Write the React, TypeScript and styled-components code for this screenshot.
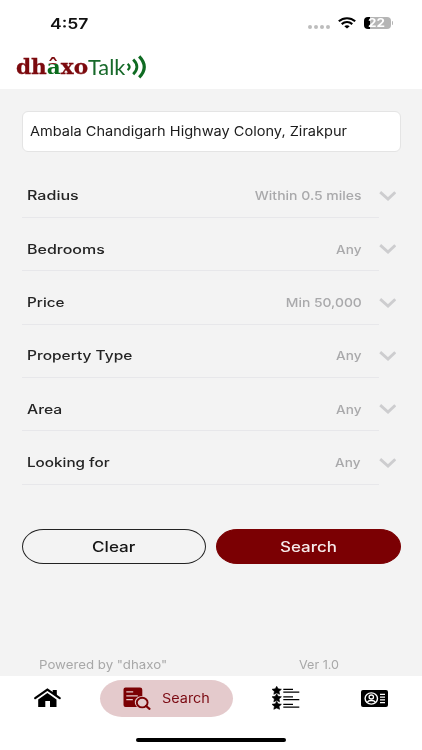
import React from 'react';
import styled, { createGlobalStyle } from 'styled-components';

const GlobalStyle = createGlobalStyle`
  * { box-sizing: border-box; }
  html, body { margin: 0; padding: 0; background: #fff; overflow: hidden; }
  body { font-family: Inter, "Liberation Sans", sans-serif; }
  svg { display: block; flex: none; }
  button { font-family: inherit; }
`;

const Screen = styled.div`
  display: flex;
  flex-direction: column;
  width: 422px;
  height: 750px;
  background: #f3f3f3;
`;

/* Extended lettering: glyphs are widened without changing their height. */
const Wide = styled.span<{ $sx: number; $origin?: string }>`
  display: inline-block;
  white-space: nowrap;
  transform: scaleX(${(p) => p.$sx});
  transform-origin: ${(p) => p.$origin ?? 'left'} center;
`;

const Header = styled.header`
  height: 89px;
  background: #fff;
`;

const StatusBar = styled.div`
  display: flex;
  align-items: center;
  height: 46px;
  padding-left: 50px;
  padding-right: 29px;
`;

const Clock = styled.div`
  flex: 1;
  padding-top: 1px;
  font-size: 15px;
  font-weight: 600;
  line-height: 20px;
  color: #111;
`;

const StatusIcons = styled.div`
  display: flex;
  align-items: center;
`;

const Dots = styled.div`
  display: flex;
  gap: 1.7px;
  margin: 8px 8px 0 0;
  i {
    width: 4px;
    height: 4px;
    border-radius: 50%;
    background: #bdbdbd;
  }
`;

const Battery = styled.div`
  display: flex;
  align-items: center;
  justify-content: center;
  width: 27px;
  height: 12.5px;
  margin-left: 8px;
  border-radius: 4px;
  background: linear-gradient(90deg, #000 6px, #b5b5b5 6px);
  color: #fff;
  font-size: 12px;
  font-weight: 700;
  line-height: 12px;
`;

const BatteryCap = styled.div`
  width: 1.5px;
  height: 4px;
  margin-left: 1px;
  border-radius: 0 2px 2px 0;
  background: #b5b5b5;
`;

const Logo = styled.div`
  display: flex;
  align-items: center;
  height: 41px;
  padding-left: 16px;
`;

const LogoSerif = styled.div`
  width: 71.5px;
  font: 700 21px/30px "DejaVu Serif", serif;
  color: #7c0a0e;
  -webkit-text-stroke: 0.3px #7c0a0e;
`;

const LogoAccent = styled.span`
  -webkit-text-stroke: 0;
  background: linear-gradient(#7c0a0e 0 41%, #0b6b1c 41%);
  background-clip: text;
  -webkit-background-clip: text;
  color: transparent;
`;

const LogoSans = styled.div`
  width: 38.5px;
  font: 400 20.5px/30px Lato, sans-serif;
  color: #17692a;
`;

const Main = styled.main`
  display: flex;
  flex-direction: column;
  flex: 1;
  padding: 22px 21.5px 0 21.5px;
`;

const Field = styled.div`
  display: flex;
  align-items: center;
  height: 41px;
  padding: 0 0 1px 7px;
  border: 1px solid #e4e4e4;
  border-radius: 6px;
  background: #fff;
  color: #1b1b1b;
  font-size: 13px;
`;

const Filters = styled.div`
  display: flex;
  flex-direction: column;
  margin-top: 12.8px;
`;

const FilterRow = styled.div`
  display: grid;
  grid-template-columns: 357px 1fr;
  height: 53.32px;
`;

const FilterBody = styled.div`
  display: flex;
  align-items: center;
  justify-content: space-between;
  padding: 10px 17px 0 5px;
  border-bottom: 1px solid #e7e7ea;
`;

const FilterLabel = styled.div`
  color: #242424;
  font-size: 12.5px;
  font-weight: 500;
`;

const FilterValue = styled.div<{ $shift?: number }>`
  margin-right: ${(p) => p.$shift ?? 0}px;
  color: #a9a9ab;
  font-size: 12px;
  font-weight: 500;
`;

const FilterArrow = styled.div`
  display: flex;
  align-items: center;
  padding-top: 9px;
`;

const Actions = styled.div`
  display: grid;
  grid-template-columns: 1fr 1fr;
  gap: 10.5px;
  margin-top: 44px;
`;

const ActionButton = styled.button<{ $primary?: boolean }>`
  height: 35.5px;
  padding: 0;
  border: 1px solid ${(p) => (p.$primary ? '#7b0003' : '#222')};
  border-radius: 22px / 18px;
  background: ${(p) => (p.$primary ? '#7b0003' : 'transparent')};
  color: ${(p) => (p.$primary ? '#f6eaea' : '#161616')};
  font-size: 14px;
  font-weight: 500;
`;

const Footnote = styled.footer`
  display: grid;
  grid-template-columns: 260.5px 1fr;
  margin-top: auto;
  padding: 0 0 2px 17px;
  color: #a8a8a8;
  font-size: 12px;
  line-height: 18px;
`;

const BottomBar = styled.nav`
  height: 74px;
  background: #fff;
`;

const Tabs = styled.div`
  display: grid;
  grid-template-columns: 94.6px 144px 94.2px 83.6px;
  align-items: center;
  justify-items: center;
  height: 44px;
`;

const ActiveTab = styled.div`
  display: flex;
  align-items: center;
  gap: 11.5px;
  width: 133px;
  height: 37px;
  padding-left: 22.5px;
  border-radius: 22px / 18.5px;
  background: #e4cacc;
  color: #7b0a12;
  font-size: 13px;
`;

const HomeIndicator = styled.div`
  width: 150px;
  height: 4px;
  margin: 18px 0 0 136px;
  border-radius: 2px;
  background: #000;
`;

const Wifi = () => (
  <svg width="18" height="12" viewBox="0 0 18 12" fill="none" stroke="#000" strokeWidth="2.1">
    <path d="M0.8 4.3C5.5 0.2 12.5 0.2 17.2 4.3" />
    <path d="M3.7 7.1C6.8 4.5 11.2 4.5 14.3 7.1" />
    <path d="M6.3 9.2C7.9 8 10.1 8 11.7 9.2L9 11.6Z" fill="#000" stroke="none" />
  </svg>
);

const Waves = () => (
  <svg width="22" height="24" viewBox="0 0 22 24" fill="none" stroke="#0f6b22">
    <path d="M1.6 8.9Q5.6 12 1.6 15.1" strokeWidth="2.3" />
    <path d="M7.2 4.6Q14.6 12 7.2 19.2" strokeWidth="2.8" />
    <path d="M13.2 1.4Q23.3 12 13.2 22.3" strokeWidth="3.1" />
  </svg>
);

const Chevron = () => (
  <svg width="17" height="10" viewBox="0 0 17 10" fill="none" stroke="#cdcdcf" strokeWidth="2.9">
    <path d="M1.2 1.2L9 8L16.3 1.2" />
  </svg>
);

const HomeIcon = () => (
  <svg width="27" height="20" viewBox="0 0 27 20">
    <path d="M18.7 2H22.8V8L18.7 4.8Z" />
    <path d="M1.2 10.2L13.4 1.5L25.7 10.2" fill="none" stroke="#000" strokeWidth="2.2" strokeLinecap="round" />
    <path d="M13.4 5L22.5 11.5V19H16V13.1H11.3V19H4.2V11.5Z" />
  </svg>
);

const SearchDocIcon = () => (
  <svg width="28" height="23" viewBox="0 0 28 23" fill="none">
    <path d="M2.5 0.5H17A2.3 2.3 0 0 1 19.3 2.8V9C14.8 9 11.8 12 11.8 15.2C11.8 17.5 13 18.9 14.3 20H2.5A2 2 0 0 1 0.5 18V2.5A2 2 0 0 1 2.5 0.5Z" fill="#7b0003" />
    <path d="M3.3 4.9H10.2M3.3 8.8H14.8M3.3 12.7H9.8" stroke="#e4cacc" strokeWidth="1.3" />
    <ellipse cx="19.2" cy="15.6" rx="5.4" ry="4.8" stroke="#7b0003" strokeWidth="1.9" />
    <path d="M23.1 19L26.5 21.8" stroke="#7b0003" strokeWidth="2.2" strokeLinecap="round" />
  </svg>
);

const star = 'M4.7 0L6.1 2.5L9.4 3L7 5.1L7.6 8L4.7 6.7L1.8 8L2.4 5.1L0 3L3.3 2.5Z';

const StarListIcon = () => (
  <svg width="28" height="24" viewBox="0 0 28 24">
    {[0.3, 7.8, 15.3].map((y) => (
      <g key={y} transform={`translate(0 ${y})`}>
        <path d={star} stroke="#000" strokeWidth="0.6" />
        <path d="M11.3 3.1H21M11.3 5.8H27.3" stroke="#000" strokeWidth="1.1" />
      </g>
    ))}
  </svg>
);

const CardIcon = () => (
  <svg width="27" height="17" viewBox="0 0 27 17" fill="none" stroke="#fff">
    <rect width="27" height="17" rx="2" fill="#000" stroke="none" />
    <ellipse cx="10.3" cy="8.5" rx="6.2" ry="5.6" strokeWidth="1.4" />
    <ellipse cx="10.3" cy="7" rx="2.2" ry="2" strokeWidth="1.3" />
    <path d="M6.3 12.3C7.4 9.9 13.2 9.9 14.3 12.3" strokeWidth="1.3" />
    <path d="M19 4.3H24M19 7.1H24M19 9.9H24M19 12.7H24" strokeWidth="1.2" />
  </svg>
);

type Filter = { label: string; lx: number; value: string; vx: number; shift?: number };

const filters: Filter[] = [
  { label: 'Radius', lx: 1.285, value: 'Within 0.5 miles', vx: 1.166 },
  { label: 'Bedrooms', lx: 1.28, value: 'Any', vx: 1.13 },
  { label: 'Price', lx: 1.22, value: 'Min 50,000', vx: 1.155 },
  { label: 'Property Type', lx: 1.24, value: 'Any', vx: 1.13 },
  { label: 'Area', lx: 1.26, value: 'Any', vx: 1.13 },
  { label: 'Looking for', lx: 1.22, value: 'Any', vx: 1.13, shift: 1 },
];

export default function App() {
  return (
    <Screen>
      <GlobalStyle />
      <Header>
        <StatusBar>
          <Clock><Wide $sx={1.17}>4:57</Wide></Clock>
          <StatusIcons>
            <Dots><i /><i /><i /><i /></Dots>
            <Wifi />
            <Battery><Wide $sx={1.12} $origin="center">22</Wide></Battery>
            <BatteryCap />
          </StatusIcons>
        </StatusBar>
        <Logo>
          <LogoSerif><Wide $sx={1.03}>dh<LogoAccent>â</LogoAccent>xo</Wide></LogoSerif>
          <LogoSans><Wide $sx={1.06}>Talk</Wide></LogoSans>
          <Waves />
        </Logo>
      </Header>
      <Main>
        <Field><Wide $sx={1.12}>Ambala Chandigarh Highway Colony, Zirakpur</Wide></Field>
        <Filters>
          {filters.map((f) => (
            <FilterRow key={f.label}>
              <FilterBody>
                <FilterLabel><Wide $sx={f.lx}>{f.label}</Wide></FilterLabel>
                <FilterValue $shift={f.shift}><Wide $sx={f.vx} $origin="right">{f.value}</Wide></FilterValue>
              </FilterBody>
              <FilterArrow><Chevron /></FilterArrow>
            </FilterRow>
          ))}
        </Filters>
        <Actions>
          <ActionButton><Wide $sx={1.22} $origin="center">Clear</Wide></ActionButton>
          <ActionButton $primary><Wide $sx={1.21} $origin="center">Search</Wide></ActionButton>
        </Actions>
        <Footnote>
          <div><Wide $sx={1.105}>Powered by "dhaxo"</Wide></div>
          <div><Wide $sx={1.05}>Ver 1.0</Wide></div>
        </Footnote>
      </Main>
      <BottomBar>
        <Tabs>
          <HomeIcon />
          <ActiveTab><SearchDocIcon /><Wide $sx={1.11}>Search</Wide></ActiveTab>
          <StarListIcon />
          <CardIcon />
        </Tabs>
        <HomeIndicator />
      </BottomBar>
    </Screen>
  );
}
